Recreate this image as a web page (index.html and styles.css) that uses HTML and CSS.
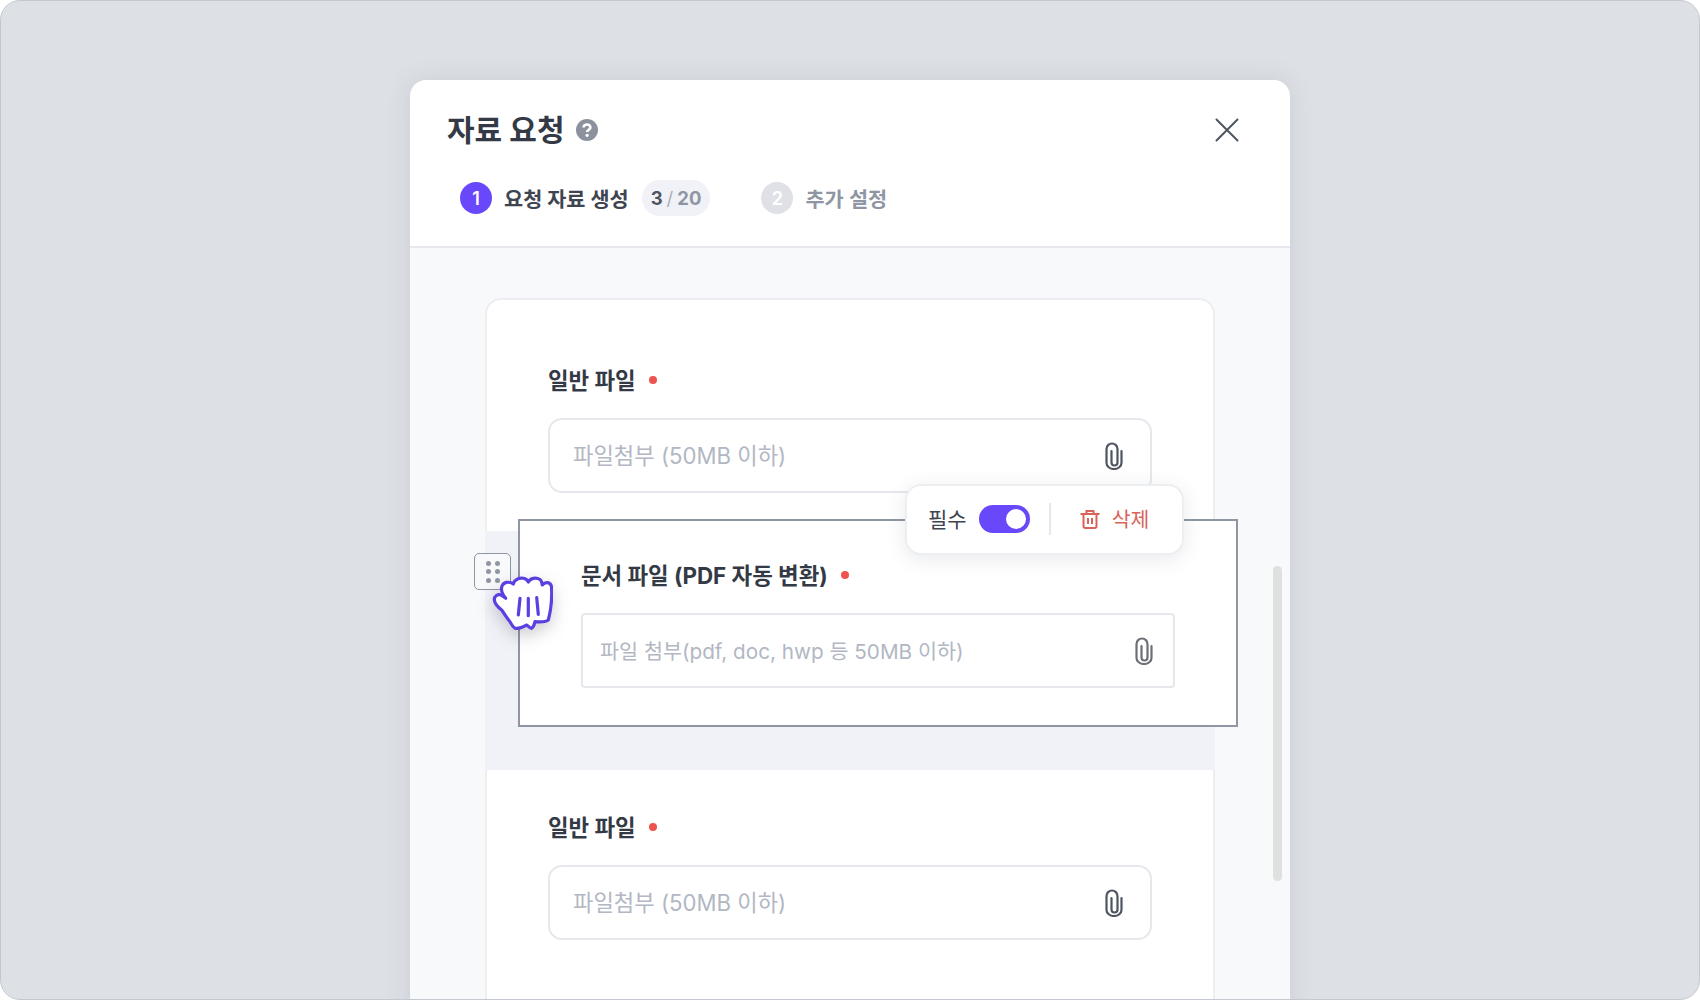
FILE: index.html
```html
<!DOCTYPE html>
<html lang="ko">

<head>
    <meta charset="UTF-8">
    <meta name="viewport" content="width=device-width, initial-scale=1.0">
    <title>자료 요청</title>
    <link rel="stylesheet" href="styles.css">
</head>

<body>
    <div class="frame">
        <div class="modal">
            <div class="modal-head">
                <div class="title-row">
                    <h1 class="title">자료 요청</h1>
                    <svg class="help-icon" width="22" height="22" viewBox="0 0 22 22">
                        <circle cx="11" cy="11" r="11" fill="#8b929e"/>
                        <path d="M7.600 8.600c0-1.900 1.500-3.100 3.400-3.100s3.400 1.100 3.400 2.900c0 2.300-3.300 2.300-3.300 4.600" fill="none" stroke="#fff" stroke-width="2.600"/>
                        <circle cx="11.100" cy="16.300" r="1.600" fill="#fff"/>
                    </svg>
                    <svg class="close-icon" width="24" height="24" viewBox="0 0 24 24">
                        <path d="M1.500 1.500l21 21M22.500 1.500l-21 21" fill="none" stroke="#4e5561" stroke-width="2" stroke-linecap="round"/>
                    </svg>
                </div>
                <div class="steps">
                    <div class="step">
                        <span class="step-num">1</span>
                        <span class="step-name">요청 자료 생성</span>
                        <span class="count"><b>3</b><i>/</i><em>20</em></span>
                    </div>
                    <div class="step step-off">
                        <span class="step-num">2</span>
                        <span class="step-name">추가 설정</span>
                    </div>
                </div>
            </div>

            <div class="modal-body">
                <div class="card">
                    <div class="field field-first">
                        <div class="label">일반 파일<span class="dot"></span></div>
                        <div class="file-input">
                            <span>파일첨부 (50MB 이하)</span>
                            <svg class="clip" width="20" height="28" viewBox="0 0 20 28">
                                <path d="M17.500 9v12a7.500 6 0 0 1-15 0V7a5.500 5.500 0 0 1 11 0v13.500a3 3 0 0 1-6 0V9" fill="none" stroke="#4e5561" stroke-width="2.200" stroke-linecap="round"/>
                            </svg>
                        </div>
                    </div>
                    <div class="drop-slot"></div>
                    <div class="field">
                        <div class="label">일반 파일<span class="dot"></span></div>
                        <div class="file-input">
                            <span>파일첨부 (50MB 이하)</span>
                            <svg class="clip" width="20" height="28" viewBox="0 0 20 28">
                                <path d="M17.500 9v12a7.500 6 0 0 1-15 0V7a5.500 5.500 0 0 1 11 0v13.500a3 3 0 0 1-6 0V9" fill="none" stroke="#4e5561" stroke-width="2.200" stroke-linecap="round"/>
                            </svg>
                        </div>
                    </div>
                </div>

                <!-- 드래그 중인 카드 -->
                <div class="drag-card">
                    <div class="label">문서 파일 (PDF 자동 변환)<span class="dot"></span></div>
                    <div class="file-input file-input-flat">
                        <span>파일 첨부(pdf, doc, hwp 등 50MB 이하)</span>
                        <svg class="clip" width="20" height="28" viewBox="0 0 20 28">
                            <path d="M17.500 9v12a7.500 6 0 0 1-15 0V7a5.500 5.500 0 0 1 11 0v13.500a3 3 0 0 1-6 0V9" fill="none" stroke="#6b6f76" stroke-width="2.200" stroke-linecap="round"/>
                        </svg>
                    </div>
                </div>

                <div class="toolbar">
                    <span class="toolbar-label">필수</span>
                    <span class="toggle"><span class="knob"></span></span>
                    <span class="toolbar-line"></span>
                    <svg width="20" height="20" viewBox="0 0 20 20">
                        <path d="M.5 5h19M6.500 5V2h7v3M3.500 5v12a2 2 0 0 0 2 2h9a2 2 0 0 0 2-2V5M8 9v6M12 9v6" fill="none" stroke="#d9635b" stroke-width="2"/>
                    </svg>
                    <span class="toolbar-del">삭제</span>
                </div>

                <div class="drag-handle">
                    <span></span><span></span><span></span><span></span><span></span><span></span>
                </div>

                <svg class="hand" width="62" height="58" viewBox="0 0 62 58">
                    <path d="M3.300 25C3 21 7 18.500 10 20L14.700 23.300C12 20 9.500 15 11 11C12.500 7 18 6 22.300 9C23 5 28 2.500 32.300 3.300C35 3.800 36.500 5 37.300 7C39.500 3 45 2 49 4.500C50.500 5.500 51 8 51.300 10C54 6.500 59.500 6.500 60.500 11.700C61 20 60 35 57.300 45C55 47.500 48 47 44 46.700C43.500 49 42.500 52 40.700 53.300C38.500 53 37 51 35.700 50C32 52 27 54 24 53.300C21.500 52 20 48.500 19 46.700C15 42 13 38 10.700 35C8 33 4 30 3.300 25Z" fill="#fff" stroke="#5b3fe0" stroke-width="3.200" stroke-linejoin="round"/>
                    <path d="M29 23.300L27.300 40M37.300 23.300V40.700M45.700 22.700L47.300 39.300" fill="none" stroke="#5b3fe0" stroke-width="3.200" stroke-linecap="round"/>
                </svg>

                <div class="scrollbar"></div>
            </div>
        </div>
    </div>
</body>
</html>
```

FILE: styles.css
```css
* {
    box-sizing: border-box;
}

body {
    margin: 0;
    background-color: #fff;
    font-family: Inter, "Noto Sans CJK KR", sans-serif;
}

.frame {
    height: 1000px;
    padding-top: 79px;
    display: flex;
    justify-content: center;
    overflow: hidden;
    background-color: #dde0e5;
    border: 1px solid #c4c8d0;
    border-radius: 20px;
}

.modal {
    width: 880px;
    height: 1100px;
    background-color: #fff;
    border-radius: 16px 16px 0 0;
    box-shadow: 0 0 24px rgba(90, 100, 120, 0.14);
}

.modal-head {
    height: 168px;
    padding: 32px 50px 0 37px;
    border-bottom: 2px solid #e6e8ed;
}

.title-row {
    display: flex;
    align-items: center;
    height: 36px;
}

.title {
    margin: 0;
    font-size: 30px;
    line-height: 36px;
    font-weight: 700;
    color: #343a45;
}

.help-icon {
    margin-left: 11px;
}

.close-icon {
    margin-left: auto;
    margin-right: 1px;
}

.steps {
    display: flex;
    align-items: center;
    gap: 51px;
    margin-top: 32px;
    margin-left: 13px;
}

.step {
    display: flex;
    align-items: center;
    height: 36px;
}

.step-num {
    width: 32px;
    height: 32px;
    margin-right: 12px;
    display: flex;
    align-items: center;
    justify-content: center;
    border-radius: 50%;
    background-color: #6947fb;
    color: #fff;
    font-size: 18px;
    font-weight: 600;
}

.step-name {
    font-size: 20.800px;
    font-weight: 700;
    color: #3f4550;
}

.count {
    height: 36px;
    margin-left: 13px;
    padding: 0 9px;
    display: flex;
    align-items: center;
    gap: 4px;
    border-radius: 18px;
    background-color: #f1f2f7;
    font-size: 18.500px;
    font-weight: 700;
    color: #8f96a3;
}

.count b {
    font-weight: 700;
    color: #4e5561;
}

.count i {
    font-style: normal;
    font-weight: 400;
    color: #a9afba;
}

.count em {
    font-style: normal;
}

.step-off .step-num {
    background-color: #dfe1e7;
}

.step-off .step-name {
    font-weight: 600;
    color: #8f96a3;
}

.modal-body {
    position: relative;
    height: 932px;
    padding: 50px 75px 0;
    background-color: #f8f9fb;
}

.card {
    width: 730px;
    height: 800px;
    background-color: #fff;
    border: 2px solid #eceef2;
    border-radius: 16px 16px 0 0;
}

.field {
    padding: 38px 61px 0;
}

.field-first {
    height: 231px;
    padding-top: 61px;
}

.drop-slot {
    height: 239px;
    margin: 0 -2px;
    background-color: #f1f2f7;
}

.label {
    display: flex;
    align-items: center;
    height: 36px;
    font-size: 22.400px;
    font-weight: 700;
    color: #343a45;
}

.dot {
    width: 8px;
    height: 8px;
    margin-top: 2px;
    margin-left: 13px;
    border-radius: 50%;
    background-color: #ef5350;
}

.file-input {
    height: 75px;
    margin-top: 21px;
    padding: 0 26px 0 23px;
    display: flex;
    align-items: center;
    justify-content: space-between;
    background-color: #fff;
    border: 2px solid #e6e8ed;
    border-radius: 14px;
    font-size: 22.200px;
    color: #b2b7c3;
}

.file-input span {
    padding-bottom: 3px;
}

.file-input-flat {
    padding: 0 19px 0 17px;
    border-radius: 4px;
    font-size: 20.700px;
}

.file-input-flat span {
    padding-bottom: 1px;
}

.drag-card {
    position: absolute;
    left: 108px;
    top: 271px;
    width: 720px;
    height: 208px;
    padding: 35px 61px 0;
    background-color: #fff;
    border: 2px solid #8e96a3;
}

.toolbar {
    position: absolute;
    left: 495px;
    top: 236px;
    width: 279px;
    height: 71px;
    padding: 0 0 2px 21px;
    display: flex;
    align-items: center;
    background-color: #fff;
    border: 2px solid #eceef2;
    border-radius: 16px;
    box-shadow: 0 4px 20px rgba(90, 100, 120, 0.14);
}

.toolbar-label {
    padding-bottom: 1px;
    font-size: 21px;
    color: #3f4550;
}

.toggle {
    width: 51px;
    height: 28px;
    margin-left: 12px;
    padding: 4px 4px 4px 27px;
    border-radius: 14px;
    background-color: #6947fb;
}

.knob {
    display: block;
    width: 20px;
    height: 20px;
    border-radius: 50%;
    background-color: #fff;
}

.toolbar-line {
    width: 2px;
    height: 32px;
    margin: 0 29px 0 19px;
    background-color: #e6e8ed;
}

.toolbar-del {
    margin-left: 12px;
    padding-bottom: 2px;
    font-size: 20.500px;
    color: #d9635b;
}

.drag-handle {
    position: absolute;
    left: 64px;
    top: 305px;
    width: 37px;
    height: 37px;
    display: grid;
    grid-template-columns: 5px 5px;
    grid-auto-rows: 5px;
    column-gap: 4px;
    row-gap: 3.500px;
    justify-content: center;
    align-content: center;
    background-color: #f8f9fb;
    border: 1.500px solid #8e96a3;
    border-radius: 5px;
}

.drag-handle span {
    border-radius: 50%;
    background-color: #8e96a3;
}

.hand {
    position: absolute;
    left: 81px;
    top: 327px;
    filter: drop-shadow(0 6px 8px rgba(60, 60, 80, 0.25));
}

.scrollbar {
    position: absolute;
    left: 863px;
    top: 318px;
    width: 9px;
    height: 315px;
    border-radius: 4.500px;
    background-color: #e0e0e0;
}
```
